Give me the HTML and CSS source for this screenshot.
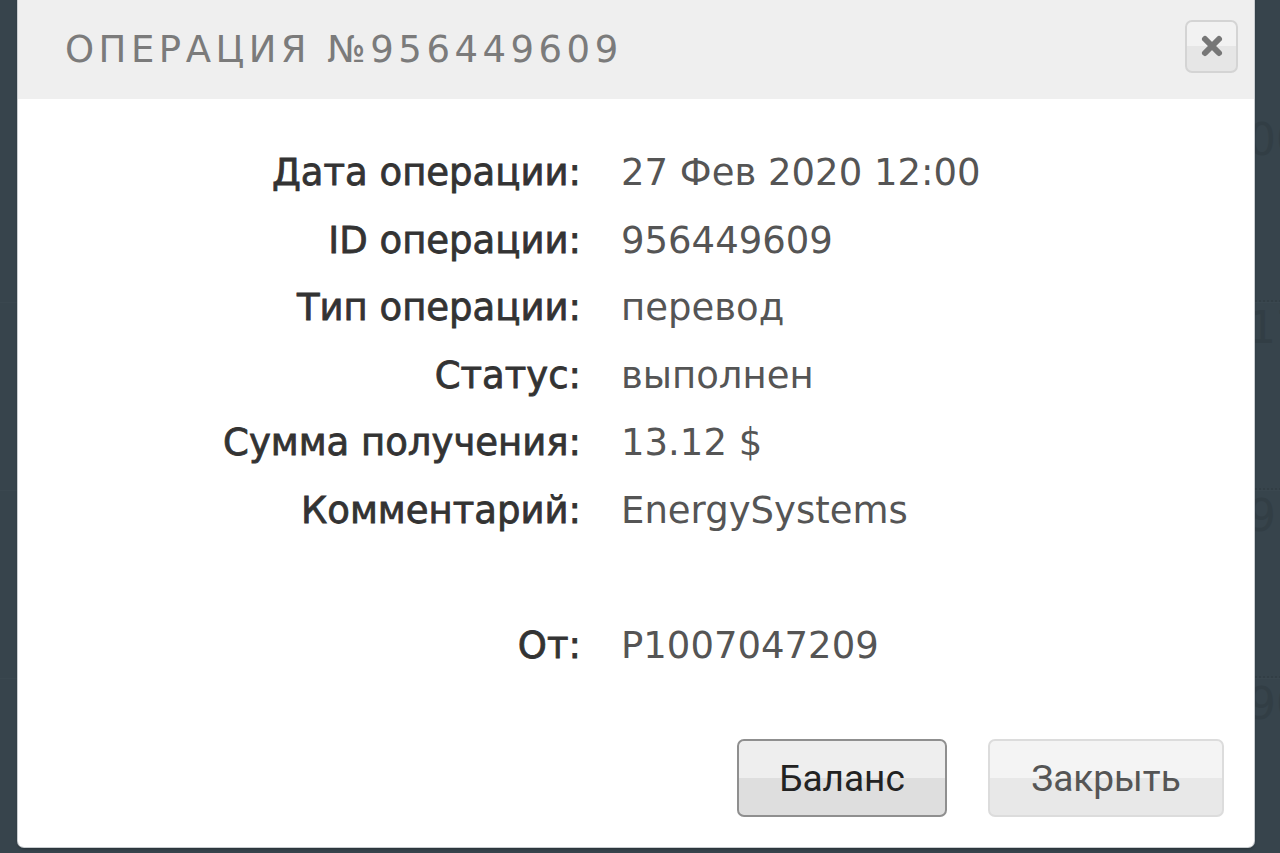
FILE: index.html
```html
<!DOCTYPE html>
<html lang="ru">
<head>
    <meta charset="UTF-8">
    <meta name="viewport" content="width=device-width, initial-scale=1.0">
    <title>Операция №956449609</title>
    <link rel="stylesheet" href="styles.css">
</head>
<body>
    <!-- страница под модальным окном -->
    <div class="backdrop">
        <div class="bg-row"><span>100</span></div>
        <div class="bg-row"><span>17</span></div>
        <div class="bg-row"><span>91</span></div>
        <div class="bg-row"><span>90</span></div>
    </div>

    <div class="modal">
        <div class="modal-header">
            <h2 class="modal-title">Операция №956449609</h2>
            <button class="close-btn" aria-label="Закрыть">
                <svg width="26" height="26" viewBox="0 0 26 26">
                    <path d="M6 6 L20 20 M20 6 L6 20" stroke="#777" stroke-width="6" stroke-linecap="round"/>
                </svg>
            </button>
        </div>

        <div class="modal-body">
            <dl class="details">
                <dt>Дата операции:</dt>
                <dd>27 Фев 2020 12:00</dd>
                <dt>ID операции:</dt>
                <dd>956449609</dd>
                <dt>Тип операции:</dt>
                <dd>перевод</dd>
                <dt>Статус:</dt>
                <dd>выполнен</dd>
                <dt>Сумма получения:</dt>
                <dd>13.12 $</dd>
                <dt>Комментарий:</dt>
                <dd>EnergySystems</dd>
                <dt class="spacer"></dt>
                <dd class="spacer"></dd>
                <dt>От:</dt>
                <dd>P1007047209</dd>
            </dl>
        </div>

        <div class="modal-footer">
            <button class="btn btn-primary">Баланс</button>
            <button class="btn btn-close">Закрыть</button>
        </div>
    </div>
</body>
</html>
```

FILE: styles.css
```css
* {
    margin: 0;
    padding: 0;
    box-sizing: border-box;
}

body {
    font-family: "DejaVu Sans", "Open Sans", Arial, sans-serif;
    background-color: #37444c;
    height: 100vh;
    overflow: hidden;
}

.backdrop {
    display: flex;
    flex-direction: column;
    align-items: flex-end;
    padding-top: 115px;
}

.bg-row {
    width: 100%;
    height: 188px;
    display: flex;
    justify-content: flex-end;
    border-bottom: 1px solid #3a474f;
}

.bg-row span {
    font-size: 44px;
    line-height: 50px;
    color: #323e45;
    border-bottom: 2px dotted #323e45;
    margin-right: -24px;
}

.modal {
    position: absolute;
    left: 18px;
    top: -8px;
    width: 1236px;
    background: #fff;
    border-radius: 6px;
    box-shadow: 0 0 0 1px #c9cdd0, 0 2px 3px rgba(0, 0, 0, 0.3);
    overflow: hidden;
}

.modal-header {
    height: 107px;
    padding: 8px 16px 0 47px;
    background: #efefef;
    display: flex;
    align-items: center;
    justify-content: space-between;
}

.modal-title {
    font-weight: normal;
    font-size: 37px;
    letter-spacing: 4.5px;
    text-transform: uppercase;
    color: #7b7b7b;
}

.close-btn {
    width: 53px;
    height: 53px;
    margin-top: -7px;
    border: 2px solid #d4d4d4;
    border-radius: 7px;
    background: linear-gradient(#f2f2f2 50%, #e6e6e6 50%);
    display: flex;
    align-items: center;
    justify-content: center;
}

.modal-body {
    padding: 40px 0 0;
}

.details {
    display: grid;
    grid-template-columns: 563px 1fr;
    column-gap: 40px;
    font-size: 37px;
    line-height: 67.5px;
}

.details dt {
    text-align: right;
    color: #333;
    -webkit-text-stroke: 0.8px #333;
}

.details dd {
    color: #555;
}

.details .spacer {
    height: 67.5px;
}

.modal-footer {
    display: flex;
    justify-content: flex-end;
    gap: 41px;
    padding: 60px 30px 30px;
}

.btn {
    font-family: Roboto, Arial, sans-serif;
    font-size: 37px;
    height: 78px;
    color: #555;
    background: linear-gradient(#f4f4f4 50%, #e8e8e8 50%);
    border: 2px solid #dcdcdc;
    border-radius: 7px;
}

.btn-primary {
    width: 210px;
    color: #222;
    border-color: #8f8f8f;
    background: linear-gradient(#eeeeee 50%, #dedede 50%);
}

.btn-close {
    width: 236px;
}
```
